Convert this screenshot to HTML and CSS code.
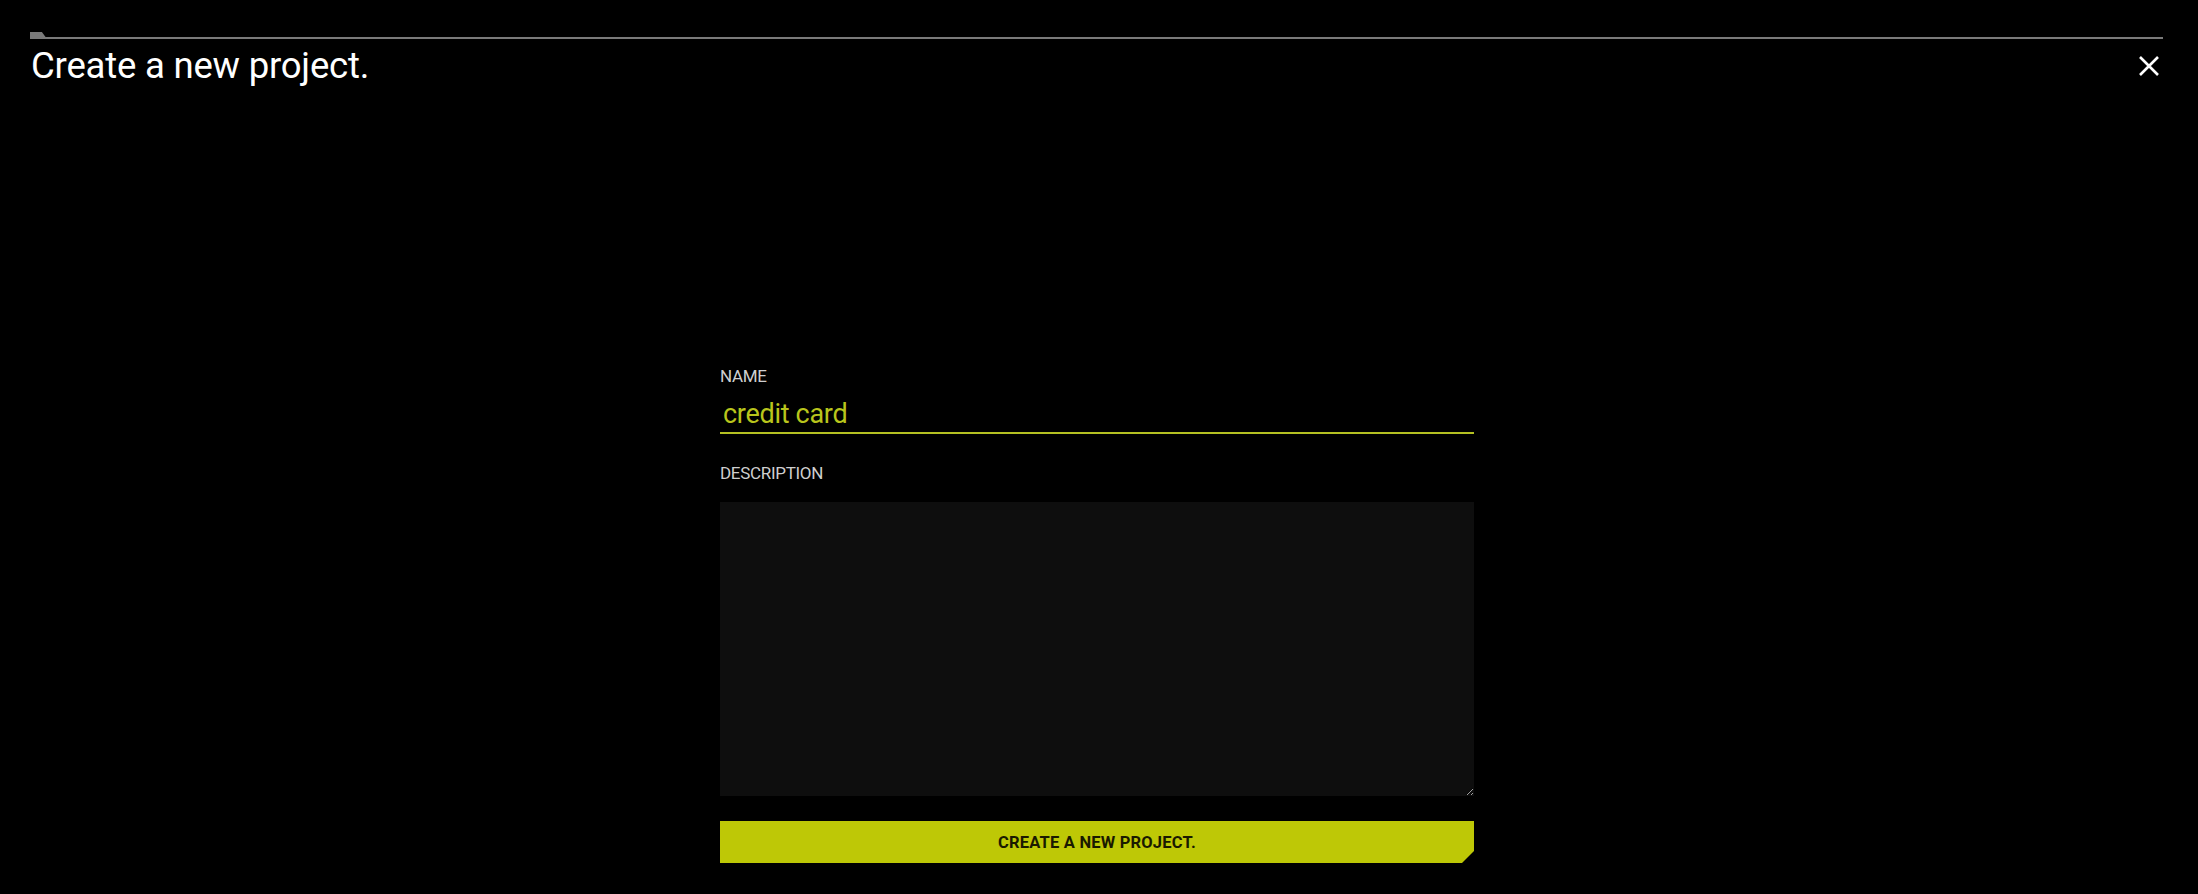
FILE: index.html
```html
<!DOCTYPE html>
<html lang="en">
<head>
<meta charset="utf-8">
<title>Create a new project.</title>
<link rel="stylesheet" href="styles.css">
</head>
<body>
<div class="page">
  <header class="header">
    <div class="rule"></div>
    <div class="header-row">
      <h1 class="title">Create a new project.</h1>
      <button class="close" aria-label="Close">
        <svg width="22" height="22" viewBox="0 0 22 22"><path d="M2 2 L20 20 M20 2 L2 20" stroke="#fff" stroke-width="2.6" fill="none"/></svg>
      </button>
    </div>
  </header>
  <div class="main">
    <main class="form">
      <label class="label label-name">NAME</label>
      <input class="name-input" type="text" value="credit card">
      <label class="label label-desc">DESCRIPTION</label>
      <textarea class="desc"></textarea>
      <button class="submit">CREATE A NEW PROJECT.</button>
    </main>
  </div>
</div>
</body>
</html>
```
FILE: styles.css
```css
html, body {
  margin: 0;
  padding: 0;
  background: #000;
  height: 100%;
}
body {
  font-family: Roboto, "Noto Sans", sans-serif;
  color: #fff;
  overflow: hidden;
}
.header {
  padding: 37px 35px 0 30px;
}
.rule {
  position: relative;
  height: 2px;
  background: #7a7a7a;
}
.rule::before {
  content: "";
  position: absolute;
  left: 0;
  bottom: 0;
  width: 17px;
  height: 7px;
  background: #7a7a7a;
  clip-path: polygon(0 0, 70% 0, 100% 100%, 0 100%);
}
.header-row {
  display: flex;
  justify-content: space-between;
  align-items: center;
  padding-left: 1px;
  padding-top: 3px;
}
.title {
  margin: 0;
  font-weight: 400;
  font-size: 36.5px;
  line-height: 48px;
  letter-spacing: -0.2px;
  color: #fff;
}
.close {
  background: none;
  border: none;
  padding: 0;
  margin-right: 3px;
  width: 22px;
  height: 22px;
  display: flex;
}
.main {
  display: flex;
  justify-content: center;
  padding-right: 4px;
}
.form {
  width: 754px;
  padding-top: 276px;
  display: flex;
  flex-direction: column;
}
.label {
  font-size: 17px;
  line-height: 20px;
  color: #cfcfcf;
  letter-spacing: -0.3px;
}
.name-input {
  margin-top: 10px;
  background: transparent;
  border: none;
  border-bottom: 2px solid #b4c022;
  outline: none;
  color: #b9c51c;
  font-family: Roboto, "Noto Sans", sans-serif;
  font-size: 27px;
  line-height: 32px;
  height: 36px;
  padding: 0 3px;
  letter-spacing: -0.3px;
}
.label-desc {
  margin-top: 29px;
}
.desc {
  margin-top: 19px;
  height: 294px;
  box-sizing: border-box;
  background: #0e0e0e;
  border: none;
  outline: none;
  color: #fff;
  padding: 8px;
}
.submit {
  margin-top: 25px;
  height: 42px;
  background: #bec806;
  border: none;
  color: #1a1a00;
  font-family: Roboto, "Noto Sans", sans-serif;
  font-weight: 700;
  font-size: 16.5px;
  letter-spacing: 0.2px;
  clip-path: polygon(0 0, 100% 0, 100% calc(100% - 12px), calc(100% - 12px) 100%, 0 100%);
}
```
